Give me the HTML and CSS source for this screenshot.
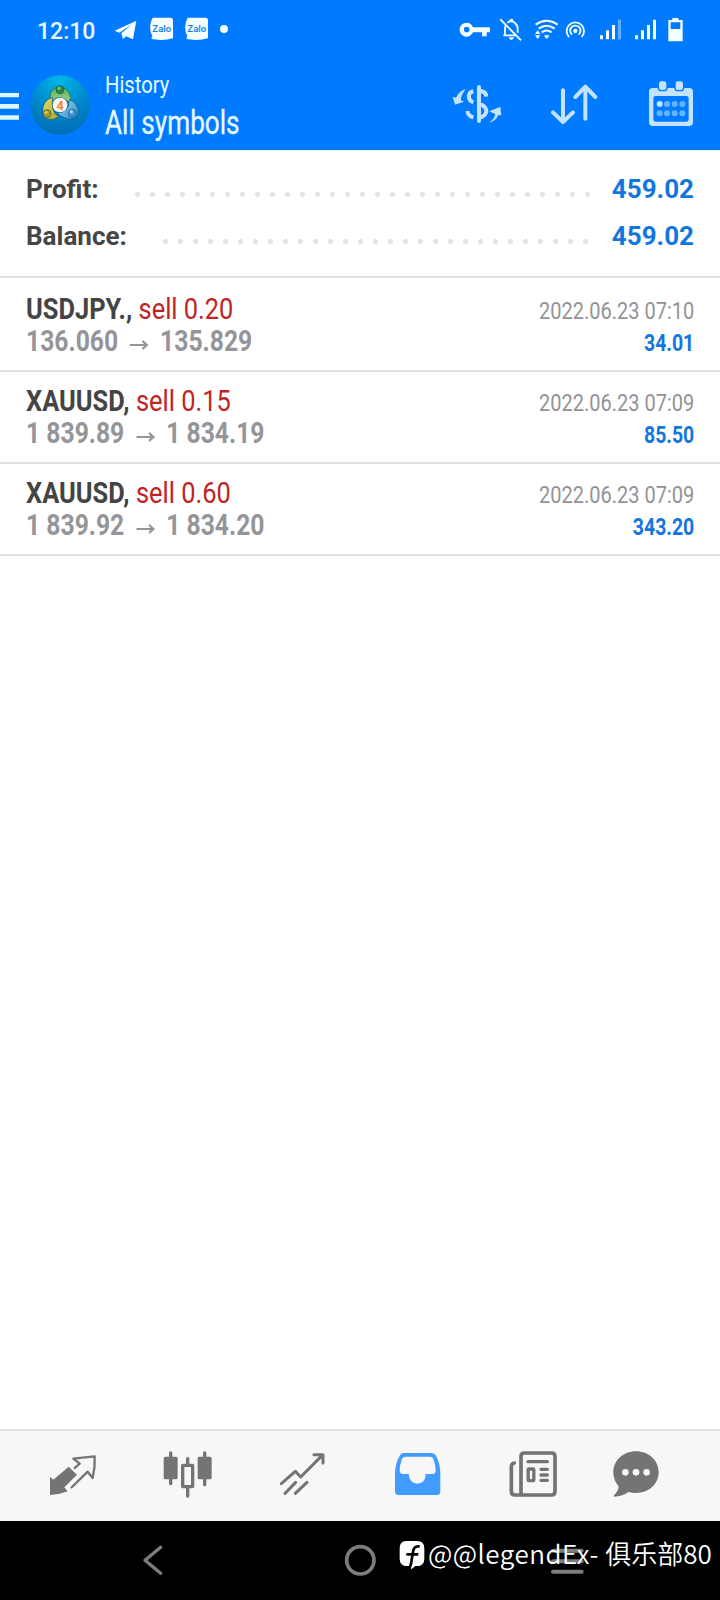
FILE: index.html
```html
<!DOCTYPE html>
<html lang="en">
<head>
<meta charset="utf-8">
<title>History</title>
<link rel="stylesheet" href="styles.css">
</head>
<body>
<div class="screen">
  <div class="status">
    <div class="group">
      <span class="time">12:10</span>
      <svg class="white" width="35" height="60" viewBox="330 0 105 180"><path d="M344 92L409 62L399 118L378 109L369 117L364 100L396 73L358 98Z"/></svg>
      <svg class="white" width="35" height="60" viewBox="435 0 105 180"><path d="M458 53H511Q519 53 519 61V115Q490 123 464 118Q458 119 454 115L457 109Q443 81 458 53Z"/><text class="zalo" x="457" y="95" textLength="57" lengthAdjust="spacingAndGlyphs">Zalo</text></svg>
      <svg class="white" width="35" height="60" viewBox="540 0 105 180"><path d="M563 53H616Q624 53 624 61V115Q595 123 569 118Q563 119 559 115L562 109Q548 81 563 53Z"/><text class="zalo" x="562" y="95" textLength="57" lengthAdjust="spacingAndGlyphs">Zalo</text></svg>
      <svg class="white" width="20" height="60" viewBox="645 0 60 180"><circle cx="672" cy="87" r="12"/></svg>
    </div>
    <div class="group">
      <svg class="white" width="40" height="60" viewBox="45 0 120 180"><path fill-rule="evenodd" d="M80 68A21 21 0 1 0 99 97H126V109H140V97H150V82H99A21 21 0 0 0 80 68ZM80 80A8.500 8.500 0 1 1 80 97A8.500 8.500 0 1 1 80 80Z"/></svg>
      <svg class="line" width="35" height="60" viewBox="165 0 105 180" stroke-width="5.500"><path d="M181 58L243 121M195 105V86Q195 80 198 75M190 106H228M202 68Q214 60 224 68Q233 75 233 86V98"/><path class="white" stroke="none" d="M208 65V61Q208 56 214 56Q220 56 220 61V65ZM206 112H222Q220 120 214 120Q208 120 206 112Z"/></svg>
      <svg class="line" width="32" height="60" viewBox="270 0 96 180" stroke-width="6"><path d="M287 74Q320 51 353 74M296 86Q320 68 344 86M305 97Q320 86 335 97"/><path class="white" stroke="none" d="M312 107Q320 103 328 107L320 117ZM285 102L293 91L301 102ZM285 106H301L293 117Z"/></svg>
      <svg class="line" width="30" height="60" viewBox="366 0 90 180" stroke-width="5.500"><path d="M387 111A26 26 0 1 1 425 111M396 104A15.500 15.500 0 1 1 416 104"/><circle class="white" stroke="none" cx="406" cy="93" r="6.500"/></svg>
      <svg class="white" width="36" height="60" viewBox="456 0 108 180"><path d="M480 106H489V118H480ZM498 91H507V118H498ZM516 75H525V118H516Z"/><path opacity=".4" d="M534 59H543V118H534Z"/></svg>
      <svg class="white" width="34" height="60" viewBox="564 0 102 180"><path d="M585 106H594V118H585ZM603 91H612V118H603ZM621 75H630V118H621ZM639 59H648V118H639Z"/></svg>
      <svg class="white" width="28" height="60" viewBox="666 0 84 180"><path fill-rule="evenodd" d="M697 54H715V60H728V124H685V60H697ZM692 67V87H721V67Z"/></svg>
    </div>
  </div>

  <div class="header">
    <svg class="ice" width="27" height="89" viewBox="0 180 81 267"><path d="M0 279H57V292H0ZM0 312H57V326H0ZM0 346H57V359H0Z"/></svg>
    <svg width="73" height="89" viewBox="81 180 219 267">
      <defs>
        <radialGradient id="disc" cx=".5" cy=".08" r="1"><stop offset="0" stop-color="#00b8e8"/><stop offset=".5" stop-color="#0089cd"/><stop offset="1" stop-color="#0067b4"/></radialGradient>
        <linearGradient id="green" x2="0" y2="1"><stop offset="0" stop-color="#50ac50"/><stop offset="1" stop-color="#a6d99b"/></linearGradient>
        <linearGradient id="gold" x2="1" y2="1"><stop offset="0" stop-color="#e5df69"/><stop offset="1" stop-color="#b7a622"/></linearGradient>
        <linearGradient id="sky" x2="1" y2="1"><stop offset="0" stop-color="#a9dcf5"/><stop offset="1" stop-color="#2387cc"/></linearGradient>
      </defs>
      <circle cx="180" cy="315" r="89.500" fill="url(#disc)"/>
      <g stroke="#17556b" stroke-width="2">
        <path fill="url(#green)" d="M150 298Q148 266 172 262Q204 256 212 292L211 310Q180 280 157 302Z"/>
        <path fill="url(#gold)" d="M158 292Q127 301 128 335Q126 352 142 357Q162 362 176 350Q151 336 158 292Z"/>
        <path fill="url(#sky)" d="M208 299Q236 308 235 341Q228 362 202 356Q184 353 172 339Q208 337 208 299Z"/>
        <circle cx="180" cy="269" r="12" fill="#2c873b"/><circle cx="141" cy="341" r="12" fill="#a89727"/><circle cx="217" cy="340" r="12" fill="#3b96da"/>
      </g>
      <circle cx="177" cy="265" r="5" fill="#78c47a"/><circle cx="138" cy="337" r="5" fill="#d8ca5a"/><circle cx="214" cy="335" r="5" fill="#a5d8f8"/>
      <circle cx="180" cy="315" r="22" fill="#f7f5f1"/>
      <text class="four" x="180" y="329" text-anchor="middle">4</text>
    </svg>
    <div class="titles">
      <div class="sub">History</div>
      <div class="title">All symbols</div>
    </div>
    <div class="tools">
      <svg class="pale" width="70" height="89" viewBox="30 180 210 267" stroke-width="12">
        <path d="M117 261V363"/>
        <path stroke-linecap="butt" stroke-width="12" d="M100 274Q85 277 87 293Q88 303 100 307M82 333Q84 348 100 352M122 273Q138 275 139 290M122 313Q139 320 139 334Q137 348 122 352"/>
        <path class="palefill" d="M78 267Q58 272 48 293L38 290L45 314L72 305L62 300Q64 282 78 267ZM147 367Q161 361 166 343L148 334L181 320L184 346L175 345Q167 365 147 367Z"/>
      </svg>
      <svg class="pale" width="100" height="89" viewBox="240 180 300 267" stroke-width="12"><path d="M369 271V366M339 337L369 366L399 337M436 356V262M406 291L436 260L466 291"/></svg>
      <svg width="100" height="89" viewBox="540 180 300 267">
        <path class="palefill" fill-rule="evenodd" d="M638 264H748Q759 264 759 275V367Q759 378 748 378H638Q627 378 627 367V275Q627 264 638 264ZM647 288Q640 288 640 295V358Q640 365 647 365H739Q746 365 746 358V295Q746 288 739 288Z"/>
        <rect class="peg" x="655" y="242" width="26" height="30" rx="9"/><rect class="peg" x="705" y="242" width="26" height="30" rx="9"/>
        <g fill="#66b5ff"><circle class="palefill" cx="659" cy="312" r="9"/><circle cx="681" cy="312" r="9"/><circle cx="704" cy="312" r="9"/><circle cx="727" cy="312" r="9"/><circle cx="659" cy="340" r="9"/><circle cx="681" cy="340" r="9"/><circle cx="704" cy="340" r="9"/><circle cx="727" cy="340" r="9"/></g>
      </svg>
    </div>
  </div>

  <div class="summary">
    <div class="sum"><span class="label">Profit:</span><span class="dots d1"></span><span class="total">459.02</span></div>
    <div class="sum"><span class="label">Balance:</span><span class="dots d2"></span><span class="total">459.02</span></div>
  </div>

  <div class="deals">
    <div class="deal first">
      <div class="left"><div class="sym"><b>USDJPY.,</b> <span class="sell">sell 0.20</span></div><div class="price">136.060 <svg class="arrow" width="23" height="14" viewBox="0 0 23 14"><path d="M0 7H21M15.500 3L21 7L15.500 11"/></svg> 135.829</div></div>
      <div class="right"><div class="date">2022.06.23 07:10</div><div class="gain">34.01</div></div>
    </div>
    <div class="deal">
      <div class="left"><div class="sym"><b>XAUUSD,</b> <span class="sell">sell 0.15</span></div><div class="price">1 839.89 <svg class="arrow" width="23" height="14" viewBox="0 0 23 14"><path d="M0 7H21M15.500 3L21 7L15.500 11"/></svg> 1 834.19</div></div>
      <div class="right"><div class="date">2022.06.23 07:09</div><div class="gain">85.50</div></div>
    </div>
    <div class="deal">
      <div class="left"><div class="sym"><b>XAUUSD,</b> <span class="sell">sell 0.60</span></div><div class="price">1 839.92 <svg class="arrow" width="23" height="14" viewBox="0 0 23 14"><path d="M0 7H21M15.500 3L21 7L15.500 11"/></svg> 1 834.20</div></div>
      <div class="right"><div class="date">2022.06.23 07:09</div><div class="gain">343.20</div></div>
    </div>
  </div>

  <div class="tabs">
    <svg class="gray" width="120" height="90" viewBox="0 33 360 270"><path class="grayfill" d="M206 140L231 164L193 202L203 214Q178 224 150 225V171L160 179Z"/><path stroke-width="7" stroke-linecap="butt" d="M222 146L239 131L220 116L284 109Q286 142 278 174L263 155L213 204"/></svg>
    <svg class="gray" width="120" height="90" viewBox="360 33 360 270"><path stroke-width="10" d="M512 99V191M614 99V194M563 116V132M563 205V228"/><path class="grayfill" d="M496 110H528Q533 110 533 115V173Q533 178 528 178H496Q491 178 491 173V115Q491 110 496 110ZM598 110H630Q635 110 635 115V173Q635 178 630 178H598Q593 178 593 173V115Q593 110 598 110Z"/><rect x="548" y="136" width="30" height="64" rx="1" stroke-width="10"/></svg>
    <svg class="gray" width="120" height="90" viewBox="720 33 360 270"><path stroke-width="9" d="M844 191L886 154L902 171L966 107M942 104H969V129M855 220L887 187M886 220L921 187"/></svg>
    <svg width="120" height="90" viewBox="0 33 360 270"><path fill="#429cff" fill-rule="evenodd" d="M131 99H215Q224 99 228 107Q241 132 241 160V214Q241 225 231 225H115Q105 225 105 214V160Q105 132 119 107Q122 99 131 99ZM137 110Q129 110 126 117Q119 135 119 151Q119 162 128 162H146Q148 191 173 191Q197 189 197 162H218Q228 162 227 151Q227 135 220 117Q218 110 210 110Z"/></svg>
    <svg class="gray" width="120" height="90" viewBox="360 33 360 270"><path stroke-width="11" d="M463 129Q454 130 454 141V214Q454 225 465 225H575Q585 225 585 214V109Q585 99 575 99H493Q483 99 483 109V223"/><path stroke-width="10" d="M504 125H562M543 148H562M543 165H562M543 181H562"/><rect x="504.500" y="147" width="17" height="35" rx="2" stroke-width="10"/></svg>
    <svg class="gray" width="120" height="90" viewBox="720 33 360 270"><path class="grayfill" d="M828 94C866 94 896 121 896 157S866 219 828 219Q816 219 806 216Q785 230 762 230V226Q775 215 776 199Q760 181 760 157C760 121 790 94 828 94Z"/><g fill="#f7f7f7" stroke="none"><circle cx="796" cy="157" r="10"/><circle cx="828" cy="157" r="10"/><circle cx="860" cy="157" r="10"/></g></svg>
  </div>

  <div class="sysnav">
    <svg class="nav" width="240" height="79" viewBox="0 303 720 237"><path stroke-width="10" d="M482 382L435 421L482 460"/></svg>
    <svg class="nav" width="240" height="79" viewBox="720 303 720 237"><circle cx="1081" cy="421" r="41" stroke-width="11"/></svg>
    <svg class="nav" width="240" height="79" viewBox="360 303 720 237"><path stroke-width="12" d="M579 392H665M579 424H665M579 455H665"/></svg>
    <div class="mark">
      <svg width="26" height="30" viewBox="0 0 78 90"><path fill="#fff" d="M22 3H54Q76 3 76 25V56Q76 78 54 78H49L37 88L34 78H24Q2 78 2 56V25Q2 3 22 3Z"/><path fill="none" stroke="#000" stroke-width="8" d="M62 19H57Q44 19 42 36L37 66Q36 74 32 83M22 43H58"/></svg>
      <span class="handle"><span class="latin">@@legendEx- </span>俱乐部80</span>
    </div>
  </div>
</div>
</body>
</html>
```
FILE: styles.css
```css
* { box-sizing: border-box; }
body { margin: 0; font-family: Roboto, "Liberation Sans", sans-serif; background: #fff; }
svg { display: block; flex: none; }
.screen { width: 720px; height: 1600px; display: flex; flex-direction: column; overflow: hidden; }

.status { height: 60px; background: #007aff; display: flex; justify-content: space-between; padding: 0 30px 0 37px; }
.group { display: flex; }
.time { width: 73px; font-size: 23px; font-weight: 500; line-height: 63px; color: #eaf8ff; }
.white { fill: #f4fdff; }
.line { fill: none; stroke: #f4fdff; }
.zalo { font-size: 29px; font-weight: 600; fill: #1b83e8; }

.header { height: 90px; background: #007aff; border-bottom: 1px solid #1b6fcc; display: flex; }
.ice { fill: #dcf8ff; }
.four { font-size: 40px; font-weight: 700; fill: #f0863c; }
.titles { padding: 9px 0 0 5px; color: #e6faff; width: 350px; white-space: nowrap; }
.sub { font-size: 24.5px; line-height: 32px; transform: scaleX(.825); transform-origin: 0 0; }
.title { font-size: 33px; line-height: 43px; transform: scaleX(.793); transform-origin: 0 0; -webkit-text-stroke: .3px; }
.tools { display: flex; }
.pale { fill: none; stroke: #c3e3ff; stroke-linecap: round; stroke-linejoin: round; }
.palefill { fill: #c3e3ff; stroke: none; }
.peg { fill: #c3e3ff; stroke: #007aff; stroke-width: 4; }

.summary { height: 128px; border-top: 1px solid #e0ffff; border-bottom: 2px solid #e2e2e2; padding: 15px 26px 0 26px; }
.sum { height: 47px; display: flex; align-items: center; font-size: 26px; font-weight: 700; line-height: 47px; }
.label { color: #464646; }
.total { color: #1276de; margin-left: auto; }
.dots { height: 5px; margin-top: 9px; background: radial-gradient(circle, #e4e4e4 2.2px, transparent 2.8px) 0 0 / 15px 5px repeat-x; }
.d1 { width: 465px; margin-left: auto; }
.d2 { width: 435px; margin-left: auto; }
.d1 + .total { margin-left: 17px; }
.d2 + .total { margin-left: 19px; }

.deal { height: 92px; border-bottom: 2px solid #e2e2e2; padding: 13px 26px 0 26px; display: flex; justify-content: space-between; white-space: nowrap; }
.first { height: 94px; padding-top: 15px; }
.left, .right { line-height: 32px; }
.right { padding-top: 2px; text-align: right; font-size: 24px; }
.sym, .price { font-size: 30px; transform-origin: 0 0; }
.sym { color: #444; transform: scaleX(.848); }
.sell { color: #c02424; }
.price { color: #949598; font-weight: 700; transform: scaleX(.823); }
.arrow { display: inline-block; vertical-align: -1px; margin: 0 6px 0 7px; fill: none; stroke: #949598; stroke-width: 2.2; }
.date, .gain { transform-origin: 100% 0; }
.date { color: #929396; transform: scaleX(.834); }
.gain { color: #1276de; font-weight: 700; transform: scaleX(.81); }

.tabs { margin-top: auto; height: 92px; border-top: 2px solid #e2e2e2; background: #f7f7f7; display: flex; }
.gray { fill: none; stroke: #747474; stroke-linecap: round; stroke-linejoin: round; }
.grayfill { fill: #747474; stroke: none; }

.sysnav { position: relative; height: 79px; background: #000; display: flex; }
.nav { fill: none; stroke: #7d7d7d; stroke-linecap: round; stroke-linejoin: round; }
.mark { position: absolute; left: 399px; top: 14px; display: flex; align-items: center; gap: 3px; white-space: nowrap; }
.mark svg { margin-top: 4px; }
.handle { font-family: "Noto Sans CJK SC", sans-serif; font-weight: 350; font-size: 26px; line-height: 36px; color: #fff; }
.latin { letter-spacing: .5px; }
```
